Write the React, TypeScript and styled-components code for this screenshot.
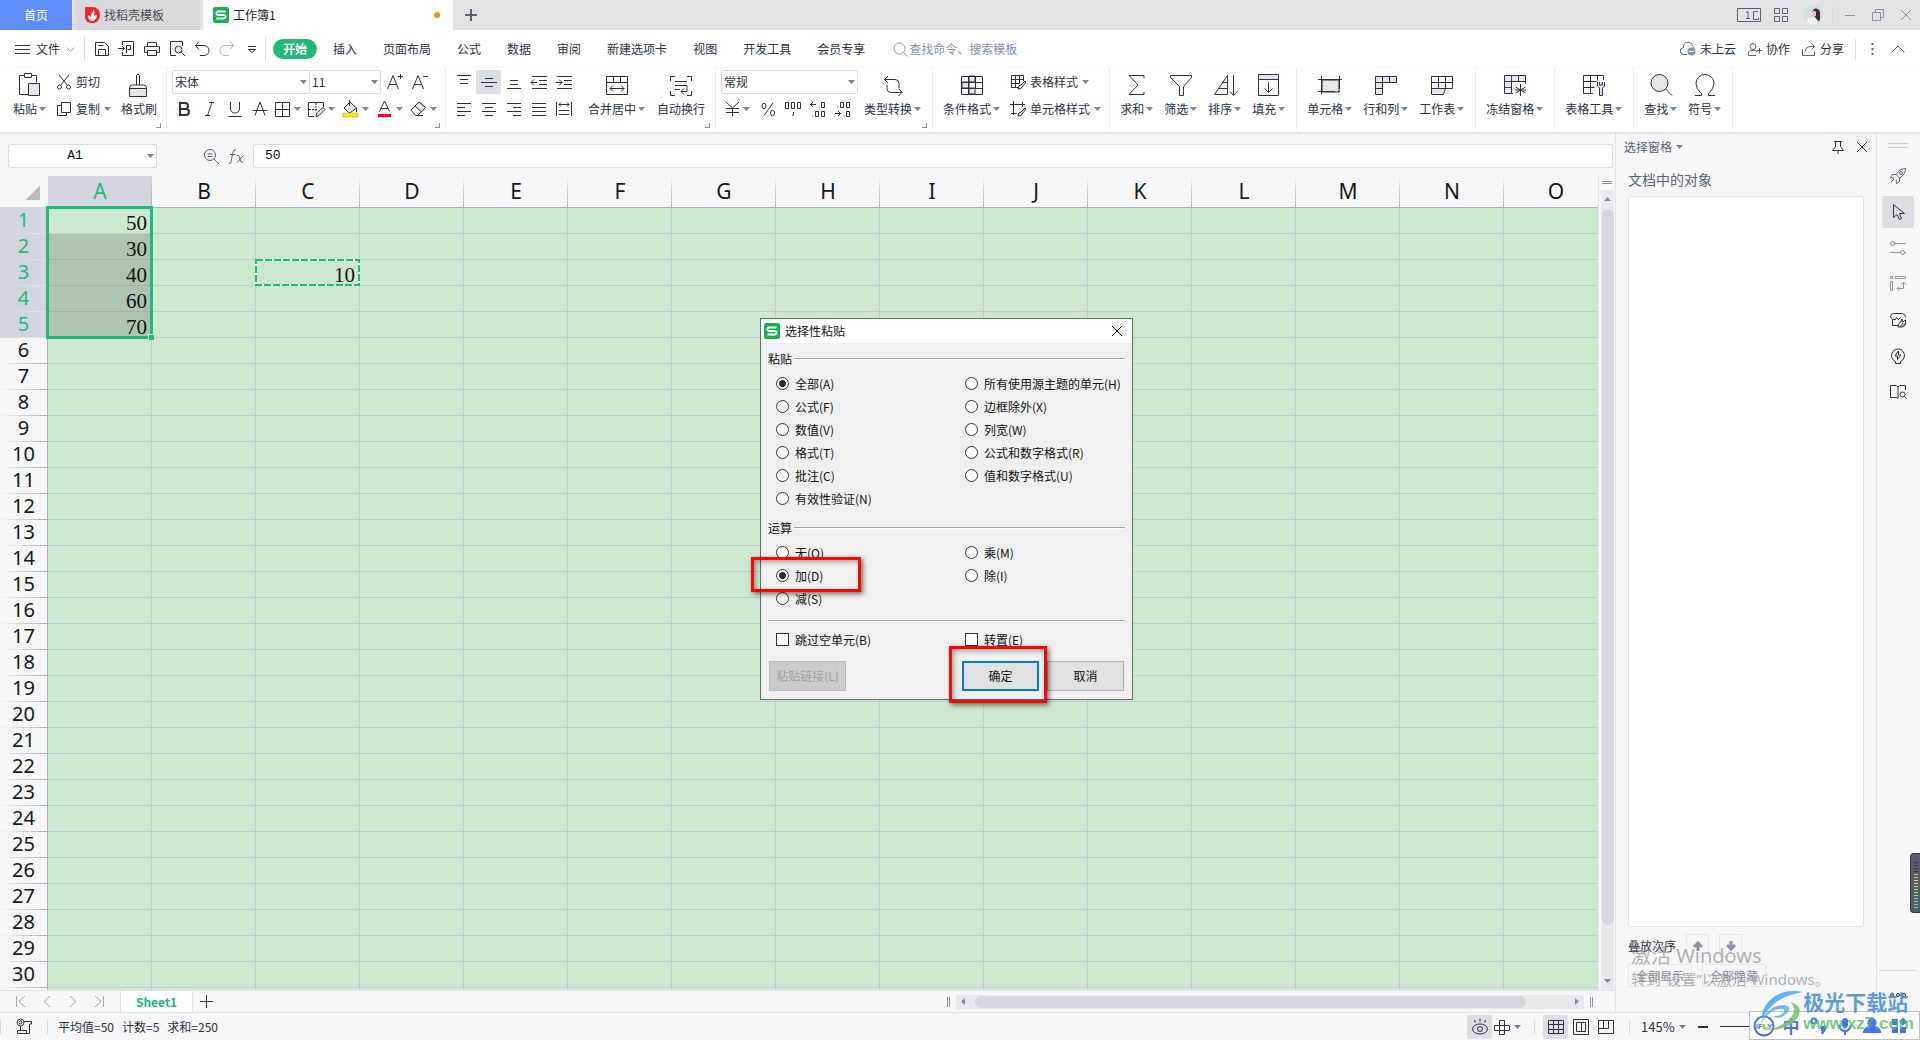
import React from "react";
import styled, { createGlobalStyle, css } from "styled-components";

const ui = `"Noto Sans CJK SC", "Noto Sans", sans-serif`;
const c = {
  ink: "#2a3143",
  soft: "#56617c",
  mute: "#8490ad",
  line: "#d9dbe0",
  bg: "#f6f7f9",
  green: "#21b97c",
  cell: "#cce8cf",
  grid: "#c3c8d6",
  active: "#dadfe5",
  shade: "#e4e6ea",
};

const Global = createGlobalStyle`
  *, *::before, *::after { box-sizing: border-box; }
  html, body { margin: 0; height: 100%; overflow: hidden; }
  body { font-family: ${ui}; font-size: 12px; line-height: 16px; color: ${c.ink}; background: ${c.bg}; }
  button, input, select { font: inherit; color: inherit; margin: 0; padding: 0; border: 0; background: none; }
  button { display: flex; align-items: center; justify-content: center; white-space: nowrap; }
  svg { display: block; flex: none; }
`;

/* ---------- shared parts ---------- */

type IconProps = { w: number; h?: number; color?: string; sw?: number; children: React.ReactNode };
const Icon = ({ w, h = w, color, sw = 1, children }: IconProps) => (
  <svg width={w} height={h} viewBox={`0 0 ${w} ${h}`} fill="none" stroke="currentColor" strokeWidth={sw} color={color} aria-hidden="true">
    {children}
  </svg>
);
const P = ({ d, fill }: { d: string; fill?: string }) => <path d={d} fill={fill} />;

const Caret = () => (
  <svg width="7" height="4" viewBox="0 0 7 4" aria-hidden="true">
    <path d="M0 0h7L3.5 4z" fill="#77819c" />
  </svg>
);

const Shell = styled.div`
  position: relative;
  display: flex;
  flex-direction: column;
  height: 100vh;
  overflow: hidden;
`;
const Row = styled.div`
  display: flex;
  align-items: center;
`;
const Column = styled.div<{ $gap?: number }>`
  display: flex;
  flex-direction: column;
  gap: ${(p) => p.$gap ?? 0}px;
`;
const Rule = styled.span<{ $h: number; $m?: number }>`
  flex: none;
  width: 1px;
  height: ${(p) => p.$h}px;
  margin: 0 ${(p) => p.$m ?? 0}px;
  background: ${c.line};
`;

/* ---------- title bar ---------- */

const TitleBar = styled.header`
  display: flex;
  flex: none;
  height: 30px;
  background: #e2e3e7;
`;
const HomeTab = styled.button`
  width: 72px;
  margin-right: 3px;
  color: #fff;
  background: #5f8efb;
`;
const FileTab = styled.button<{ $active?: boolean }>`
  justify-content: flex-start;
  gap: 4px;
  width: ${(p) => (p.$active ? 250 : 125)}px;
  margin-right: ${(p) => (p.$active ? 0 : 3)}px;
  padding: 0 13px 0 10px;
  color: ${(p) => (p.$active ? "#1c2230" : "#454c5c")};
  background: ${(p) => (p.$active ? "#fff" : "#d8d9dd")};
`;
const Unsaved = styled.span`
  width: 6px;
  height: 6px;
  margin-left: auto;
  border-radius: 50%;
  background: #e99b0b;
`;
const BarButton = styled.button<{ $w: number }>`
  width: ${(p) => p.$w}px;
  height: 30px;
  color: ${c.soft};
`;
const WindowTools = styled.div`
  display: flex;
  align-items: center;
  margin-left: auto;
`;

const WpsLogo = () => (
  <svg width="16" height="16" viewBox="0 0 16 16" aria-hidden="true">
    <rect width="16" height="16" rx="2" fill="#14b454" />
    <path d="M12.5 4.5H5.2a1.6 1.6 0 0 0 0 3.5h5.6a1.6 1.6 0 0 1 0 3.5H3.5" fill="none" stroke="#fff" strokeWidth="1.8" />
  </svg>
);
const DocerLogo = () => (
  <svg width="15" height="16" viewBox="0 0 15 16" aria-hidden="true">
    <path d="M0 0h8a7 8 0 0 1 0 16h-2A6 6 0 0 1 0 10z" fill="#f5242f" />
    <path d="M6.6 14C4 13 2.6 10.5 2.8 8c2 .4 3.5 2 3.800 4C5.500 8 6.500 5 9 2.800c1 3 .4 6.500-1.700 9.200.6-2 2.200-3.800 4.700-4.500.2 3-1.800 6-5.400 6.500z" fill="#fff" />
  </svg>
);

/* ---------- menu row ---------- */

const MenuRow = styled.nav`
  display: flex;
  flex: none;
  align-items: center;
  height: 38px;
  padding-right: 12px;
  background: #fff;
`;
const FileMenu = styled.button`
  height: 24px;
  padding: 0 9px 0 15px;
  gap: 6px;
`;
const QuickTools = styled.div`
  display: flex;
  padding: 0 1px 0 4px;
`;
const Tool = styled.button<{ $active?: boolean; $dim?: boolean }>`
  width: 25px;
  height: 24px;
  border-radius: 2px;
  color: ${(p) => (p.$dim ? "#a9afbd" : c.ink)};
  background: ${(p) => (p.$active ? c.active : "none")};
`;
const MenuTab = styled.button<{ $active?: boolean }>`
  height: 20px;
  padding: 0 13px;
  ${(p) =>
    p.$active &&
    css`
      margin: 0 3px 0 7px;
      padding: 0 10px;
      border-radius: 10px;
      color: #fff;
      font-weight: 700;
      background: ${c.green};
    `}
`;
const Search = styled.label`
  display: flex;
  align-items: center;
  gap: 1px;
  margin-left: 15px;
  color: #8b94ab;
  input {
    width: 140px;
    height: 20px;
    padding-bottom: 2px;
    outline: 0;
  }
  input::placeholder {
    color: #8590ab;
    opacity: 1;
  }
`;
const Account = styled.div`
  display: flex;
  align-items: center;
  gap: 11px;
  margin-left: auto;
`;
const TextTool = styled.button`
  gap: 4px;
  height: 24px;
`;

/* ---------- ribbon ---------- */

const Ribbon = styled.section`
  position: relative;
  z-index: 1;
  display: flex;
  flex: none;
  height: 64px;
  background: #fff;
  box-shadow: 0 1px 3px rgba(60, 70, 90, 0.2);
`;
const Group = styled.div<{ $l?: number; $r?: number; $gap?: number }>`
  position: relative;
  display: flex;
  align-items: flex-start;
  gap: ${(p) => p.$gap ?? 11}px;
  height: 62px;
  padding: 2px ${(p) => p.$r ?? 11}px 0 ${(p) => p.$l ?? 10}px;
  border-right: 1px solid #e9ebef;
`;
const Launcher = styled.button`
  position: absolute;
  right: 5px;
  bottom: 2px;
  width: 5px;
  height: 5px;
  border: solid ${c.mute};
  border-width: 0 1px 1px 0;
`;
const BigButton = styled.button`
  flex-direction: column;
  gap: 2px;
  padding-top: 1px;
  span {
    display: flex;
    align-items: center;
    gap: 2px;
  }
`;
const Split = styled.button`
  justify-content: flex-start;
  width: 34px;
  height: 24px;
  gap: 2px;
`;
const LineButton = styled.button`
  justify-content: flex-start;
  height: 24px;
  gap: 4px;
`;
const Combo = styled.div<{ $w: number }>`
  position: relative;
  width: ${(p) => p.$w}px;
  height: 24px;
  border: 1px solid ${c.line};
  border-radius: 2px;
  & + & {
    border-left: 0;
  }
  select {
    width: 100%;
    height: 22px;
    padding: 0 2px;
    appearance: none;
    outline: 0;
  }
  svg {
    position: absolute;
    right: 2px;
    top: 9px;
    pointer-events: none;
  }
`;

const Big = ({ label, caret = true, children }: { label: string; caret?: boolean; children: React.ReactNode }) => (
  <BigButton type="button">
    <Icon w={28}>{children}</Icon>
    <span>
      {label}
      {caret && <Caret />}
    </span>
  </BigButton>
);
const SplitTool = ({ name, children }: { name: string; children: React.ReactNode }) => (
  <Split type="button" aria-label={name}>
    <Icon w={20}>{children}</Icon>
    <Caret />
  </Split>
);
const SmallTool = ({ name, active, dim, children }: { name: string; active?: boolean; dim?: boolean; children: React.ReactNode }) => (
  <Tool type="button" aria-label={name} $active={active} $dim={dim}>
    <Icon w={18}>{children}</Icon>
  </Tool>
);

/* ---------- workspace ---------- */

const Body = styled.main`
  display: flex;
  flex: 1;
  min-height: 0;
`;
const Work = styled.div`
  display: flex;
  flex: 1;
  flex-direction: column;
  min-width: 0;
`;
const WorkRow = styled.div`
  display: flex;
  flex: 1;
  min-height: 0;
`;
const Book = styled.section`
  display: flex;
  flex: 1;
  flex-direction: column;
  min-width: 0;
`;
const FormulaBar = styled.div`
  display: flex;
  flex: none;
  align-items: center;
  height: 44px;
  padding: 4px 2px 0 8px;
`;
const Field = styled.div<{ $w?: number }>`
  display: flex;
  align-items: center;
  flex: ${(p) => (p.$w ? "none" : 1)};
  width: ${(p) => (p.$w ? `${p.$w}px` : "auto")};
  height: 24px;
  padding-right: 2px;
  border: 1px solid ${c.line};
  border-radius: 2px;
  background: #fff;
  input {
    flex: 1;
    min-width: 0;
    padding: ${(p) => (p.$w ? "0 6px 0 0" : "0 0 0 11px")};
    outline: 0;
    color: #111;
    font-family: "Liberation Mono", monospace;
    font-size: 13px;
    text-align: ${(p) => (p.$w ? "center" : "left")};
  }
`;
const FormulaTools = styled.div`
  display: flex;
  gap: 8px;
  justify-content: flex-end;
  width: 96px;
  padding-right: 8px;
  color: ${c.soft};
`;
const SheetArea = styled.div`
  display: flex;
  flex: 1;
  min-height: 0;
`;
const GridView = styled.div`
  flex: 1;
  min-width: 0;
  overflow: hidden;
  border-right: 1px solid #e1e3e9;
  background: ${c.cell};
`;
const Sheet = styled.table`
  width: 1608px;
  table-layout: fixed;
  border-collapse: separate;
  border-spacing: 0;
  th,
  td {
    padding: 0;
  }
`;
const ColHead = styled.th<{ $on?: boolean }>`
  width: 104px;
  height: 32px;
  border-bottom: 1px solid #a5adc4;
  color: ${(p) => (p.$on ? c.green : "#15171c")};
  font: 400 21px/31px "Noto Sans", sans-serif;
  background: linear-gradient(#a5adc400, #a5adc4) right / 1px 100% no-repeat, ${(p) => (p.$on ? "#d2d5dd" : c.bg)};
`;
const Corner = styled.th`
  width: 48px;
  height: 32px;
  border-bottom: 1px solid #d5d8e0;
  background: linear-gradient(to bottom right, transparent 50%, #b9bbbf 50%) 25px 9px / 15px 15px no-repeat, ${c.bg};
`;
const RowHead = styled.th<{ $on?: boolean }>`
  height: 26px;
  border-right: 1px solid #a5adc4;
  color: ${(p) => (p.$on ? c.green : "#15171c")};
  font: 400 20px/23px "Noto Sans", sans-serif;
  vertical-align: top;
  background: linear-gradient(to right, #a5adc400, ${(p) => (p.$on ? "#dfe2e8" : "#a5adc4")}) bottom / 100% 1px no-repeat,
    ${(p) => (p.$on ? "#d2d5dd" : c.bg)};
`;
const Cell = styled.td<{ $shade?: boolean }>`
  position: relative;
  height: 26px;
  border: solid ${(p) => (p.$shade ? "#a3aeb2" : c.grid)};
  border-width: 0 1px 1px 0;
  background: ${(p) => (p.$shade ? "#adc5b0" : c.cell)};
`;
const Value = styled.span`
  display: block;
  padding: 5px 4px 0 0;
  color: #101010;
  font: 21px/20px "Liberation Serif", serif;
  text-align: right;
`;
const Selection = styled.div`
  position: absolute;
  z-index: 2;
  left: -2px;
  top: -2px;
  width: 107px;
  height: 133px;
  border: 3px solid ${c.green};
  &::after {
    content: "";
    position: absolute;
    right: -4px;
    bottom: -4px;
    width: 6px;
    height: 6px;
    border: solid ${c.cell};
    border-width: 1px 0 0 1px;
    background: ${c.green};
  }
`;
const Marching = styled.svg`
  position: absolute;
  left: -1px;
  top: -1px;
`;
const VScroll = styled.div`
  display: flex;
  flex: none;
  flex-direction: column;
  width: 16px;
  padding: 5px 1px 0 2px;
`;
const Track = styled.div<{ $h?: boolean }>`
  display: flex;
  flex: 1;
  flex-direction: ${(p) => (p.$h ? "row" : "column")};
  align-items: center;
  justify-content: space-between;
  padding: ${(p) => (p.$h ? "0 5px" : "7px 0")};
  background: #e8e9ef;
`;
const Thumb = styled.div<{ $h?: boolean }>`
  flex: 1;
  margin: ${(p) => (p.$h ? "0 49px 0 10px" : "8px 0 54px")};
  width: ${(p) => (p.$h ? "auto" : "12px")};
  height: ${(p) => (p.$h ? "12px" : "auto")};
  border-radius: 6px;
  background: #d4d7df;
`;
const Grip = styled.span<{ $v?: boolean }>`
  flex: none;
  width: ${(p) => (p.$v ? 3 : 10)}px;
  height: ${(p) => (p.$v ? 10 : 3)}px;
  margin: ${(p) => (p.$v ? "0 6px" : "0 1px 6px")};
  border: solid ${c.mute};
  border-width: ${(p) => (p.$v ? "0 1px" : "1px 0")};
`;
const SheetTabs = styled.div`
  display: flex;
  flex: none;
  align-items: center;
  height: 22px;
  padding: 0 16px 0 8px;
  border-top: 1px solid #e1e3e9;
`;
const NavButton = styled.button`
  width: 26px;
  height: 20px;
  color: #a0a4ad;
`;
const SheetTab = styled.button`
  width: 73px;
  height: 21px;
  margin-left: 8px;
  border: solid #e1e3e9;
  border-width: 0 1px;
  color: ${c.green};
  font-weight: 700;
  background: #fff;
`;
const HScroll = styled.div`
  display: flex;
  align-items: center;
  width: 658px;
  height: 14px;
  margin-left: auto;
  ${Track} {
    height: 14px;
  }
`;

/* ---------- selection pane ---------- */

const Pane = styled.aside`
  display: flex;
  flex: none;
  flex-direction: column;
  width: 261px;
  padding: 0 12px 25px;
  border-left: 1px solid #e1e3e9;
  color: ${c.soft};
`;
const PaneHead = styled.div`
  display: flex;
  align-items: center;
  height: 30px;
  margin: 0 -4px;
  gap: 4px;
`;
const PaneTools = styled.div`
  display: flex;
  margin-left: auto;
  gap: 11px;
  color: ${c.ink};
`;
const PaneTitle = styled.h2`
  margin: 8px 0 7px;
  font-size: 14px;
  font-weight: 400;
  line-height: 19px;
`;
const ObjectList = styled.div`
  flex: 1;
  border: 1px solid #e1e3e9;
  border-radius: 2px;
  background: #fff;
`;
const OrderRow = styled.div`
  display: flex;
  align-items: center;
  gap: 10px;
  margin-top: 7px;
  color: ${c.ink};
`;
const PaneButton = styled.button<{ $w: number }>`
  width: ${(p) => p.$w}px;
  height: 23px;
  border: 1px solid #e6e8ec;
  color: #8a93a8;
`;

const SideBar = styled.aside`
  display: flex;
  flex: none;
  flex-direction: column;
  align-items: center;
  width: 44px;
  padding: 11px 2px 18px 0;
  gap: 4px;
  border-left: 1px solid #dfe2e9;
`;
const SideGrip = styled.span`
  width: 20px;
  height: 5px;
  margin-bottom: 8px;
  border: solid #c9cbd0;
  border-width: 1px 0;
`;
const SideButton = styled.button<{ $active?: boolean; $color?: string }>`
  width: 32px;
  height: 32px;
  border-radius: 2px;
  color: ${(p) => p.$color ?? c.ink};
  background: ${(p) => (p.$active ? c.active : "none")};
`;
const SideMore = styled.div`
  display: flex;
  justify-content: center;
  width: 38px;
  height: 52px;
  margin-top: auto;
  padding-top: 8px;
  border-top: 1px solid ${c.line};
`;

const StatusBar = styled.footer`
  display: flex;
  flex: none;
  align-items: center;
  height: 28px;
  border-top: 1px solid #e1e3e9;
`;
const Stats = styled.div`
  display: flex;
  gap: 8px;
  margin-left: 10px;
`;
const ViewTools = styled.div`
  display: flex;
  align-items: center;
  margin-left: auto;
  width: 409px;
`;
const ViewButton = styled.button<{ $active?: boolean }>`
  width: 25px;
  height: 24px;
  border-radius: 2px;
  background: ${(p) => (p.$active ? c.active : "none")};
`;
const ZoomLevel = styled.button`
  gap: 4px;
  margin-right: 12px;
  font-size: 13px;
`;
const ZoomLine = styled.span`
  flex: 1;
  height: 1px;
  background: ${c.ink};
`;

/* ---------- paste special dialog ---------- */

const Dialog = styled.form`
  position: absolute;
  z-index: 5;
  left: 760px;
  top: 318px;
  width: 373px;
  border: 1px solid #5d6f66;
  color: #111;
  background: #f0f0f0;
`;
const DialogTitle = styled.div`
  display: flex;
  align-items: center;
  gap: 5px;
  height: 24px;
  padding: 0 9px 0 3px;
  background: #fff;
  button {
    margin-left: auto;
  }
`;
const DialogBody = styled.div`
  padding: 8px 7px;
`;
const Section = styled.fieldset`
  min-width: 0;
  margin: 0 0 10px;
  padding: 0;
  border: 0;
`;
const SectionHead = styled.div`
  display: flex;
  align-items: center;
  gap: 2px;
  margin-bottom: 5px;
`;
const Groove = styled.span`
  flex: 1;
  height: 2px;
  border-top: 1px solid #a0a0a0;
  background: #fff;
`;
const Choices = styled.div`
  display: grid;
  grid-template-columns: 189px 1fr;
  padding-left: 8px;
`;
const Options = styled(Choices)`
  margin-top: 6px;
`;
const ChoiceLabel = styled.label`
  display: flex;
  align-items: center;
  gap: 6px;
  height: 23px;
  white-space: nowrap;
  input {
    appearance: none;
    flex: none;
    width: 13px;
    height: 13px;
    border: 1px solid #333;
    background: #fff;
  }
  input[type="radio"] {
    border-radius: 50%;
  }
  input:checked {
    background: radial-gradient(circle, #2b2b2b 3px, #fff 4px);
  }
`;
const DialogButtons = styled.div`
  display: flex;
  gap: 8px;
  margin-top: 10px;
  padding: 0 1px;
`;
const DialogButton = styled.button<{ $main?: boolean }>`
  width: 77px;
  height: 30px;
  border: ${(p) => (p.$main ? "2px solid #0078d7" : "1px solid #adadad")};
  background: #e1e1e1;
  &:first-child {
    margin-right: auto;
  }
  &:disabled {
    border-color: #bfbfbf;
    color: #a0a0a0;
    background: #ccc;
  }
`;
const Marker = styled.div<{ $x: number; $y: number; $w: number; $h: number }>`
  position: absolute;
  left: ${(p) => p.$x}px;
  top: ${(p) => p.$y}px;
  width: ${(p) => p.$w}px;
  height: ${(p) => p.$h}px;
  border: 3px solid #fb0505;
  box-shadow: 2px 2px 5px rgba(0, 0, 0, 0.55), inset 2px 2px 5px rgba(0, 0, 0, 0.35);
  pointer-events: none;
`;

/* ---------- desktop overlays ---------- */

const Activation = styled.div`
  position: absolute;
  right: 95px;
  bottom: 51px;
  width: 194px;
  color: rgba(125, 127, 132, 0.6);
  font: 15px/20px "Noto Sans", "Noto Sans CJK SC", sans-serif;
  white-space: nowrap;
  pointer-events: none;
  strong {
    display: block;
    font-size: 20px;
    font-weight: 400;
    line-height: 26px;
  }
`;
const ImeBar = styled.div`
  position: absolute;
  right: 0;
  bottom: 0;
  display: flex;
  align-items: center;
  gap: 5px;
  width: 171px;
  height: 29px;
  padding-left: 3px;
  border: 1px solid #bdbfc4;
  background: #fff;
  color: #4b6ff5;
  b {
    width: 22px;
    font-size: 17px;
    text-align: center;
  }
`;
const SiteMark = styled.div`
  position: absolute;
  right: 6px;
  bottom: 6px;
  display: flex;
  align-items: center;
  pointer-events: none;
`;
const SiteName = styled.div`
  color: rgba(66, 140, 212, 0.85);
  font-size: 21px;
  font-weight: 700;
  line-height: 26px;
  small {
    display: block;
    color: rgba(76, 190, 96, 0.8);
    font: 700 17px/20px "Liberation Sans", sans-serif;
  }
`;
const Meter = styled.div`
  position: absolute;
  right: 0;
  top: 853px;
  width: 10px;
  height: 60px;
  padding: 8px 3px;
  border: 1px solid #33363f;
  border-right: 0;
  border-radius: 4px 0 0 4px;
  background: #565c6a;
  overflow: hidden;
`;
const MeterBar = styled.div`
  width: 4px;
  height: 1px;
  margin-bottom: 2px;
`;

/* ---------- data ---------- */

const columns = "ABCDEFGHIJKLMNO".split("");
const rows = Array.from({ length: 31 }, (_, i) => i + 1);
const values: Record<string, number> = { A1: 50, A2: 30, A3: 40, A4: 60, A5: 70, C3: 10 };
const menuTabs = ["开始", "插入", "页面布局", "公式", "数据", "审阅", "新建选项卡", "视图", "开发工具", "会员专享"];
const pasteChoices = ["全部(A)", "所有使用源主题的单元(H)", "公式(F)", "边框除外(X)", "数值(V)", "列宽(W)", "格式(T)", "公式和数字格式(R)", "批注(C)", "值和数字格式(U)", "有效性验证(N)"];
const mathChoices = ["无(O)", "乘(M)", "加(D)", "除(I)", "减(S)"];
const meter = ["#33363f", "#33363f", "#33363f", "#33363f", "#e9b84e", "#e9c04e", "#e6cf5a", "#dcd964", "#cfdf6c", "#bde276", "#a9e182", "#98df90", "#8ade9c", "#7edca8", "#72dab4", "#68d8be"];

const RadioSet = ({ name, items, value }: { name: string; items: string[]; value: string }) => (
  <Choices>
    {items.map((t) => (
      <ChoiceLabel key={t}>
        <input type="radio" name={name} defaultChecked={t === value} />
        {t}
      </ChoiceLabel>
    ))}
  </Choices>
);

const PasteSpecial = () => (
  <Dialog aria-label="选择性粘贴" onSubmit={(e) => e.preventDefault()}>
    <DialogTitle>
      <WpsLogo />
      选择性粘贴
      <button type="button" aria-label="关闭">
        <Icon w={12} color="#111"><P d="M1 1l10 10M11 1L1 11" /></Icon>
      </button>
    </DialogTitle>
    <DialogBody>
      <Section>
        <SectionHead>粘贴<Groove /></SectionHead>
        <RadioSet name="paste" items={pasteChoices} value="全部(A)" />
      </Section>
      <Section>
        <SectionHead>运算<Groove /></SectionHead>
        <RadioSet name="math" items={mathChoices} value="加(D)" />
      </Section>
      <Row><Groove /></Row>
      <Options>
        {["跳过空单元(B)", "转置(E)"].map((t) => (
          <ChoiceLabel key={t}>
            <input type="checkbox" />
            {t}
          </ChoiceLabel>
        ))}
      </Options>
      <DialogButtons>
        <DialogButton type="button" disabled>粘贴链接(L)</DialogButton>
        <DialogButton type="submit" $main>确定</DialogButton>
        <DialogButton type="button">取消</DialogButton>
      </DialogButtons>
    </DialogBody>
    <Marker $x={-10} $y={238} $w={110} $h={35} />
    <Marker $x={188} $y={327} $w={98} $h={57} />
  </Dialog>
);

const RibbonBar = () => (
  <Ribbon>
    <Group $l={13} $r={9} $gap={10}>
      <Big label="粘贴">
        <P d="M8.500 4.500h-5v19h9M15.500 4.500h5v7" />
        <P d="M8.500 2.500h7v4h-7z" />
        <P d="M12.500 12.500h11v12h-11z" fill={c.shade} />
      </Big>
      <Column $gap={3}>
        <LineButton type="button">
          <Icon w={16}>
            <P d="M3 1l8.500 10.500M13 1L4.500 11.500" />
            <circle cx="3.500" cy="13" r="2" /><circle cx="12.500" cy="13" r="2" />
          </Icon>
          剪切
        </LineButton>
        <LineButton type="button">
          <Icon w={16}><P d="M5.500 1.500h9v10h-9z" /><P d="M5.500 4.500h-4v10h9v-3" /></Icon>
          复制<Caret />
        </LineButton>
      </Column>
      <Big label="格式刷" caret={false}>
        <P d="M11.500 14V4.500q1.500-3 3 0V14M4.500 20v-3q0-3 3-3h11q3 0 3 3v3" />
        <P d="M4.500 17.500h17v8h-17z" fill={c.shade} />
      </Big>
      <Launcher type="button" aria-label="剪贴板" />
    </Group>

    <Group $l={5} $r={3}>
      <Column $gap={3}>
        <Row>
          <Combo $w={138}><select aria-label="字体"><option>宋体</option></select><Caret /></Combo>
          <Combo $w={71}><select aria-label="字号"><option>11</option></select><Caret /></Combo>
          <SmallTool name="增大字号"><P d="M2.500 16L8 2.500 13.500 16M4.500 11.500h7M13 3.500h5M15.500 1v5" /></SmallTool>
          <SmallTool name="减小字号"><P d="M2.500 16L8 2.500 13.500 16M4.500 11.500h7M13 3.500h5" /></SmallTool>
        </Row>
        <Row>
          <Tool type="button" aria-label="加粗"><Icon w={18} sw={2}><P d="M4 3h5a3 3 0 0 1 0 6H4zM4 9h6a3 3 0 0 1 0 6H4z" /></Icon></Tool>
          <SmallTool name="倾斜"><P d="M8 2.500h5M4 15.500h5M11 2.500l-4.500 13" /></SmallTool>
          <SmallTool name="下划线"><P d="M4.500 2v7a4.500 4 0 0 0 9 0V2M2.500 16.500h13" /></SmallTool>
          <SmallTool name="删除线"><P d="M4 15.500L9 2l5 13.500M1.500 10.500h15" /></SmallTool>
          <SplitTool name="边框"><P d="M3.500 3.500h14v14h-14zM10.500 3.500v14M3.500 10.500h14" /></SplitTool>
          <SplitTool name="绘图边框">
            <P d="M8 17.500H2.500v-14h15V8" /><path d="M10 4v8M3 10.500h8" strokeDasharray="2 1" /><P d="M10 17.500l1-4 6-5 2 2-6 6z" fill={c.shade} />
          </SplitTool>
          <SplitTool name="填充颜色">
            <P d="M4 9l6-6 6.500 6-6 4.500h-2z" fill={c.shade} /><P d="M9.500 1v6M16.500 9v4" /><path d="M3 14h15v4H3z" fill="#ffee00" stroke="#a9a53a" strokeWidth=".6" />
          </SplitTool>
          <SplitTool name="字体颜色"><P d="M5.500 12.500L10.500 2l5 10.500M7 9.500h7" /><path d="M4 16.500h13" stroke="#f00" strokeWidth="3" /></SplitTool>
          <SplitTool name="清除"><P d="M3 11l8-8 6.500 5.500-8 8h-2z" /><P d="M7 7l6.500 6L17.500 8.500 11 3zM9 16.500h6" fill={c.shade} /></SplitTool>
        </Row>
      </Column>
      <Launcher type="button" aria-label="字体设置" />
    </Group>

    <Group $l={5} $r={10} $gap={12}>
      <Column $gap={3}>
        <Row>
          <SmallTool name="顶端对齐"><P d="M2 2.500h14M5 6.500h8M5 10.500h8" /></SmallTool>
          <SmallTool name="垂直居中" active><P d="M5 5.500h8M1 9.500h16M5 13.500h8" /></SmallTool>
          <SmallTool name="底端对齐"><P d="M5 7.500h8M5 11.500h8M2 15.500h14" /></SmallTool>
          <SmallTool name="减少缩进"><P d="M2 3.500h15M9 7.500h8M9 11.500h8M2 15.500h15M1 9.500h6M4 6.500l-3 3 3 3" /></SmallTool>
          <SmallTool name="增加缩进"><P d="M2 3.500h15M9 7.500h8M9 11.500h8M2 15.500h15M1 9.500h6M4 6.500l3 3-3 3" /></SmallTool>
        </Row>
        <Row>
          <SmallTool name="左对齐"><P d="M2 3.500h14M2 7.500h8M2 11.500h14M2 15.500h8" /></SmallTool>
          <SmallTool name="居中"><P d="M2 3.500h14M5 7.500h8M2 11.500h14M5 15.500h8" /></SmallTool>
          <SmallTool name="右对齐"><P d="M2 3.500h14M8 7.500h8M2 11.500h14M8 15.500h8" /></SmallTool>
          <SmallTool name="两端对齐"><P d="M2 3.500h14M2 7.500h14M2 11.500h14M2 15.500h14" /></SmallTool>
          <SmallTool name="分散对齐"><P d="M1.500 2v14M16.500 2v14M4 4.500h10M6 2.500l-2 2 2 2M12 2.500l2 2-2 2M4 10.500h10M4 14.500h10" /></SmallTool>
        </Row>
      </Column>
      <Big label="合并居中"><P d="M3.500 5.500h21v18h-21zM3.500 11.500h21M10.500 5.500v6M17.500 5.500v6M7 17.500h14M10 14.500l-3 3 3 3M18 14.500l3 3-3 3" /></Big>
      <Big label="自动换行" caret={false}><P d="M8 5.500H3.500V10M20 5.500h4.500V10M8 24.500H3.500V20M20 24.500h4.500V20M8 10.500h12M8 14.500h12M8 18.500h5M20 14.500v6h-6M17 17.500l-3 3 3 3" /></Big>
      <Launcher type="button" aria-label="对齐设置" />
    </Group>

    <Group $l={5} $r={11} $gap={6}>
      <Column $gap={3}>
        <Combo $w={137}><select aria-label="数字格式"><option>常规</option></select><Caret /></Combo>
        <Row>
          <SplitTool name="货币"><P d="M5 3l6.500 6L18 3M11.500 9v8M5 9.500h13M5 13.500h13" /></SplitTool>
          <SmallTool name="百分比"><P d="M14 3L5 15.500" /><ellipse cx="5" cy="6" rx="2" ry="2.800" /><ellipse cx="13.500" cy="13" rx="2" ry="2.800" /></SmallTool>
          <SmallTool name="千位分隔"><P d="M1.500 2.500h3v6h-3zM7.500 2.500h3v6h-3zM13.500 2.500h3v6h-3zM9.500 12v2l-1 2" /></SmallTool>
          <SmallTool name="增加小数位"><P d="M1 4.500h6M4 2L1.500 4.500 4 7M12.500 2.500h3v5h-3zM6.500 11.500h3v5h-3zM12.500 11.500h3v5h-3zM10 6.500v1M4 15.500v1" /></SmallTool>
          <SmallTool name="减少小数位"><P d="M6.500 2.500h3v5h-3zM12.500 2.500h3v5h-3zM1 13.500h6M4 11l2.500 2.500L4 16M12.500 11.500h3v5h-3zM4 6.500v1M10 15.500v1" /></SmallTool>
        </Row>
      </Column>
      <Big label="类型转换"><P d="M9 5L5.500 8.500 9 12M5.500 8.500H16q4 0 4 4v5M20 18l3 3.500-3.500 3.500M22.500 21.500H12q-4 0-4-4v-4" /></Big>
      <Launcher type="button" aria-label="数字设置" />
    </Group>

    <Group $r={8} $gap={10}>
      <Big label="条件格式">
        <P d="M11 5h6v6h-6zM4 11h7v6H4zM11 17h6v6h-6z" fill={c.shade} /><P d="M3.500 5.500h21v18h-21zM3.500 11.500h21M3.500 17.500h21M10.500 5.500v18M17.500 5.500v12" />
      </Big>
      <Column $gap={3}>
        <LineButton type="button">
          <Icon w={16}><P d="M8 13.500H1.500v-12h12V7M1.500 5.500h12M1.500 9.500h8M5.500 1.500v12M9.500 1.500v8" /><P d="M8 15q0-4 3-4l4-4 1 1-4 5q0 2-4 2z" fill={c.shade} /></Icon>
          表格样式<Caret />
        </LineButton>
        <LineButton type="button">
          <Icon w={16}><P d="M3.500 0v14M0 3.500h15M12.500 1v5M1 12.500h6" /><P d="M8 15q0-4 3-4l4-4 1 1-4 5q0 2-4 2z" fill={c.shade} /></Icon>
          单元格样式<Caret />
        </LineButton>
      </Column>
    </Group>

    <Group>
      <Big label="求和"><P d="M21 7V4.500H6l9 9.500-9 9.500h15V21" /></Big>
      <Big label="筛选"><P d="M3.500 4.500h21v2l-8 9v9h-4v-9l-9-9z" /></Big>
      <Big label="排序"><P d="M16.500 4.500v19h-13zM11 11.500h5.500M7.500 17.500h9M22.500 4v20M19 20.500l3.500 4 3.500-4" /></Big>
      <Big label="填充"><P d="M3.500 3.500h20v5h-20z" fill={c.shade} /><P d="M3.500 8.500h20v16h-20zM13.500 11v10M9.500 17.500l4 4 4-4" /></Big>
    </Group>

    <Group>
      <Big label="单元格"><P d="M6 9h17v12H6z" fill={c.shade} /><path d="M5.500 5v18M2 8.500h24M23.500 5v13M2 20.500h17M22 20.500h2" /></Big>
      <Big label="行和列"><P d="M3.500 5.500h21v6h-14v12h-7zM10.500 5.500v6M17.500 5.500v6M3.500 11.500h7M3.500 17.500h7" fill={c.shade} /></Big>
      <Big label="工作表"><P d="M3.500 17.500h14l-2 6h-12z" fill={c.shade} /><P d="M3.500 5.500h21v12h-21zM10.500 5.500v12M17.500 5.500v12M3.500 11.500h21" /></Big>
    </Group>

    <Group>
      <Big label="冻结窗格">
        <P d="M24.500 13V4.500h-21v18H12M3.500 10.500h21M3.500 16.500h7M10.500 4.500v18M17.500 4.500v6" fill="none" />
        <path d="M4 5h20v5H10v12H4z" fill="#8a93a838" stroke="none" />
        <P d="M19.500 13v12M14.500 16l10 6M24.500 16l-10 6M14 19h11" />
      </Big>
    </Group>
    <Group>
      <Big label="表格工具">
        <P d="M13 22.500H3.500v-18h20V9M3.500 10.500h13M3.500 16.500h11M10.500 4.500v18M17.500 4.500v5" />
        <P d="M17.500 11v4l2 2v7.500h3V17l2-2v-4M19.500 11v3h3v-3" fill={c.shade} />
      </Big>
    </Group>
    <Group>
      <Big label="查找"><circle cx="12.500" cy="12" r="8.500" fill={c.shade} /><P d="M18.500 18l6.500 6.500" /></Big>
      <Big label="符号"><P d="M4 24.500h6.500v-2Q5 18 5 12.500a9 9 0 0 1 18 0q0 5.500-5.500 10v2H24" /></Big>
    </Group>
  </Ribbon>
);

const Workbook = () => (
  <Book>
    <FormulaBar>
      <Field $w={149}>
        <input aria-label="名称框" defaultValue="A1" />
        <Caret />
      </Field>
      <FormulaTools>
        <Icon w={17}><circle cx="7" cy="7" r="5.500" /><P d="M4.500 6h5M4.500 8.500h5M11 11l5 5" /></Icon>
        <Icon w={17}><P d="M8 2Q5.500 1 5 4L3 14q-.5 2-2 1.500M2 6.500h5M9 7.500q2-1 2.500 1.500l1 4q.5 2 2.500 1M15.500 7.500l-6.500 7" /></Icon>
      </FormulaTools>
      <Field><input aria-label="编辑栏" defaultValue="50" /></Field>
    </FormulaBar>
    <SheetArea>
      <GridView>
        <Sheet>
          <thead>
            <tr>
              <Corner />
              {columns.map((k) => <ColHead key={k} $on={k === "A"}>{k}</ColHead>)}
            </tr>
          </thead>
          <tbody>
            {rows.map((r) => (
              <tr key={r}>
                <RowHead $on={r < 6}>{r < 31 ? r : ""}</RowHead>
                {columns.map((k) => {
                  const id = k + r;
                  return (
                    <Cell key={id} $shade={k === "A" && r > 1 && r < 6}>
                      {values[id] && <Value>{values[id]}</Value>}
                      {id === "A1" && <Selection />}
                      {id === "C3" && (
                        <Marching width="105" height="27" aria-hidden="true">
                          <rect x="1" y="1" width="103" height="25" fill="none" stroke="#fff" strokeWidth="2" />
                          <rect x="1" y="1" width="103" height="25" fill="none" stroke={c.green} strokeWidth="2" strokeDasharray="7 2" />
                        </Marching>
                      )}
                    </Cell>
                  );
                })}
              </tr>
            ))}
          </tbody>
        </Sheet>
      </GridView>
      <VScroll>
        <Grip />
        <Track>
          <Icon w={7} h={4} color="#7f8bab"><path d="M0 4h7L3.500 0z" fill="currentColor" stroke="none" /></Icon>
          <Thumb />
          <Icon w={7} h={4} color="#7f8bab"><path d="M0 0h7L3.500 4z" fill="currentColor" stroke="none" /></Icon>
        </Track>
      </VScroll>
    </SheetArea>
    <SheetTabs>
      {[["首个工作表", "M1.500 1v11M10 1L4 6.500l6 5.500"], ["上一个工作表", "M9 1L3 6.500 9 12"], ["下一个工作表", "M3 1l6 5.500L3 12"], ["末个工作表", "M10.500 1v11M2 1l6 5.500L2 12"]].map(([name, d]) => (
        <NavButton key={name} type="button" aria-label={name}><Icon w={12} h={13}><P d={d} /></Icon></NavButton>
      ))}
      <SheetTab type="button">Sheet1</SheetTab>
      <NavButton type="button" aria-label="新建工作表"><Icon w={13} color={c.ink}><P d="M6.500 0v13M0 6.500h13" /></Icon></NavButton>
      <HScroll>
        <Grip $v />
        <Track $h>
          <Icon w={4} h={7} color="#7f8bab"><path d="M4 0v7L0 3.500z" fill="currentColor" stroke="none" /></Icon>
          <Thumb $h />
          <Icon w={4} h={7} color="#7f8bab"><path d="M0 0v7l4-3.500z" fill="currentColor" stroke="none" /></Icon>
        </Track>
        <Grip $v />
      </HScroll>
    </SheetTabs>
  </Book>
);

const SelectionPane = () => (
  <Pane>
    <PaneHead>
      选择窗格<Caret />
      <PaneTools>
        <button type="button" aria-label="固定"><Icon w={14}><P d="M4.500 1.500h5v5l3 4h-11l3-4zM7 10.500V14M3 1.500h8" /></Icon></button>
        <button type="button" aria-label="关闭"><Icon w={12}><P d="M1 1l10 10M11 1L1 11" /></Icon></button>
      </PaneTools>
    </PaneHead>
    <PaneTitle>文档中的对象</PaneTitle>
    <ObjectList />
    <OrderRow>
      叠放次序
      <PaneButton type="button" $w={23} aria-label="上移"><Icon w={10} sw={3}><P d="M5 10V3M1 6L5 2l4 4" /></Icon></PaneButton>
      <PaneButton type="button" $w={23} aria-label="下移"><Icon w={10} sw={3}><P d="M5 0v7M1 4l4 4 4-4" /></Icon></PaneButton>
    </OrderRow>
    <OrderRow>
      <PaneButton type="button" $w={64}>全部显示</PaneButton>
      <PaneButton type="button" $w={64}>全部隐藏</PaneButton>
    </OrderRow>
  </Pane>
);

export default function App() {
  return (
    <Shell>
      <Global />
      <TitleBar>
        <HomeTab type="button">首页</HomeTab>
        <FileTab type="button"><DocerLogo />找稻壳模板</FileTab>
        <FileTab type="button" $active><WpsLogo />工作簿1<Unsaved /></FileTab>
        <BarButton type="button" $w={36} aria-label="新建"><Icon w={12} sw={2}><P d="M6 0v12M0 6h12" /></Icon></BarButton>
        <WindowTools>
          <BarButton type="button" $w={32} aria-label="窗口"><Icon w={24} h={14}><P d="M.5.5h23v13H.5zM9 4.500l2-1v7M9 10.500h4M21 3.500h-4.500v8h5v-2" /></Icon></BarButton>
          <BarButton type="button" $w={32} aria-label="应用"><Icon w={14}><P d="M.5.5h5v5h-5zM8.500.5h5v5h-5zM.5 8.500h5v5h-5zM8.500 8.500h5v5h-5z" /></Icon></BarButton>
          <BarButton type="button" $w={32} aria-label="账户">
            <svg width="20" height="20" viewBox="0 0 20 20">
              <circle cx="10" cy="10" r="10" fill="#cfe0e8" />
              <path d="M9 7q1-3.500 4-3.500 4.500.5 4 6 1 4-1 7l-3-3z" fill="#3b2c33" />
              <path d="M9 6.500q2.500-1.500 4 .5v3.500q-2 2-4 0z" fill="#ecc7b8" />
              <path d="M4 18q0-6 5-6 4 0 5 7-5 2-10-1z" fill="#eef3f7" />
            </svg>
          </BarButton>
          <Rule $h={20} $m={3} />
          <BarButton type="button" $w={28} aria-label="最小化"><Icon w={12} color={c.mute}><P d="M1 6.500h10" /></Icon></BarButton>
          <BarButton type="button" $w={28} aria-label="还原"><Icon w={12} color={c.mute}><P d="M.5 3.500h8v8h-8zM3.500 3.500v-3h8v8h-3" /></Icon></BarButton>
          <BarButton type="button" $w={28} aria-label="关闭"><Icon w={12} color={c.mute}><P d="M1 1l10 10M11 1L1 11" /></Icon></BarButton>
        </WindowTools>
      </TitleBar>

      <MenuRow>
        <FileMenu type="button">
          <Icon w={15}><P d="M0 3.500h15M0 7.500h15M0 11.500h15" /></Icon>
          文件
          <Icon w={9} color="#9aa1b0"><P d="M.5 2.500l4 4 4-4" /></Icon>
        </FileMenu>
        <Rule $h={24} />
        <QuickTools>
          <SmallTool name="保存"><P d="M2.500 2.500h9l4 4v9h-13zM5.500 15.500v-6h7v6M5.500 5.500h5" /></SmallTool>
          <SmallTool name="输出为PDF"><P d="M4.500 5V1.500h11v14h-11V12M0 8.500h6M4 6l2.500 2.500L4 11M8.500 13V5.500h4v4h-3" /></SmallTool>
          <SmallTool name="打印"><P d="M4.500 6V2.500h9V6M4.500 12.500h-3v-6h15v6h-3M4.500 10.500h9v5h-9z" /></SmallTool>
          <SmallTool name="打印预览"><P d="M8 15.500H2.500v-14h12V6" /><circle cx="10.500" cy="9.500" r="3.500" fill={c.shade} /><P d="M13 12l4 4" /></SmallTool>
          <SmallTool name="撤销"><P d="M6 1.500l-3.500 4 3.500 4M2.500 5.500H11a4.500 4.500 0 0 1 0 10H7" /></SmallTool>
          <SmallTool name="恢复" dim><P d="M12 1.500l3.500 4-3.500 4M15.500 5.500H7a4.500 4.500 0 0 0 0 10h4" /></SmallTool>
          <SmallTool name="更多"><P d="M5 6.500h8M5.500 9.500L9 12.500l3.500-3z" /></SmallTool>
        </QuickTools>
        <Rule $h={24} />
        {menuTabs.map((t, i) => <MenuTab key={t} type="button" $active={i === 0}>{t}</MenuTab>)}
        <Search>
          <Icon w={15}><circle cx="6.500" cy="6.500" r="5.500" /><P d="M10.500 10.500l4 4" /></Icon>
          <input placeholder="查找命令、搜索模板" aria-label="查找命令" />
        </Search>
        <Account>
          <TextTool type="button">
            <Icon w={16} color={c.soft}><P d="M7 13.500H4a3.500 3.500 0 0 1-.5-7A4.500 4.500 0 0 1 12.500 5q1 .5 1.500 2" /><circle cx="11.500" cy="10.500" r="4" fill={c.mute} stroke="none" /><path d="M9 10.500h5" stroke="#fff" /></Icon>
            未上云
          </TextTool>
          <TextTool type="button">
            <Icon w={15} color={c.soft}><circle cx="6" cy="4.500" r="3" /><P d="M9 13.500H1.500Q.5 8.500 4 8.500h4q1.500 0 2 1.500M9.500 8.500H15M12.500 6v5.500" /></Icon>
            协作
          </TextTool>
          <TextTool type="button">
            <Icon w={15} color={c.soft}><P d="M1.500 7.500v6h12v-4M4 10q.5-5.500 6-5.500h3M10.500 1.500l3 3-3 3" /></Icon>
            分享
          </TextTool>
          <Row>
            <Rule $h={20} />
            <BarButton type="button" $w={32} aria-label="更多"><Icon w={3} h={14}><path d="M1.500 1v2M1.500 6v2M1.500 11v2" strokeWidth="2" /></Icon></BarButton>
            <BarButton type="button" $w={20} aria-label="折叠功能区"><Icon w={14} h={8}><P d="M.5 7.500L7 1l6.500 6.500" /></Icon></BarButton>
          </Row>
        </Account>
      </MenuRow>

      <RibbonBar />

      <Body>
        <Work>
          <WorkRow>
            <Workbook />
            <SelectionPane />
          </WorkRow>
          <StatusBar>
            <Row>
              <Rule $h={14} />
              <BarButton type="button" $w={46} aria-label="宏"><Icon w={18} color={c.ink}><circle cx="5.500" cy="4.500" r="3.500" /><circle cx="5.500" cy="4.500" r="1.500" /><P d="M9 3.500h7.500V6h-2v9.500H2.500v-3h9v3M5.500 8v4.500" /></Icon></BarButton>
              <Rule $h={14} />
            </Row>
            <Stats><span>平均值=50</span><span>计数=5</span><span>求和=250</span></Stats>
            <ViewTools>
              <ViewButton type="button" $active aria-label="护眼模式"><Icon w={18}><ellipse cx="9" cy="11" rx="7.500" ry="5" /><circle cx="9" cy="11" r="2.500" /><P d="M9 .5v3M3.500 2l1 2.500M14.500 2l-1 2.500" /></Icon></ViewButton>
              <Split type="button" aria-label="阅读模式"><Icon w={20}><P d="M7.500 3.500h5v14h-5zM2.500 8.500h15v5h-15z" /></Icon><Caret /></Split>
              <Rule $h={14} $m={8} />
              <ViewButton type="button" $active aria-label="普通视图"><Icon w={18}><P d="M1.500 2.500h15v13h-15zM1.500 6.500h15M1.500 11.500h15M6.500 2.500v13M11.500 2.500v13" /></Icon></ViewButton>
              <ViewButton type="button" aria-label="页面布局"><Icon w={18}><P d="M1.500 1.500h15v15h-15zM4.500 4.500h9v9h-9zM9.500 4.500v9" /></Icon></ViewButton>
              <ViewButton type="button" aria-label="分页预览"><Icon w={18}><P d="M1.500 2.500h15v13h-15zM6.500 2.500v8M11.500 2.500v8M1.500 10.500h10" /></Icon></ViewButton>
              <Rule $h={14} $m={11} />
              <ZoomLevel type="button">145%<Caret /></ZoomLevel>
              <Icon w={22} h={2} sw={2}><P d="M0 1h10" /></Icon>
              <ZoomLine />
            </ViewTools>
          </StatusBar>
        </Work>
        <SideBar>
          <SideGrip />
          <SideButton type="button" aria-label="快捷" $color={c.soft}><Icon w={18}><P d="M16.500 1.500q-6 0-9.500 6l3.500 3.500q6-3.500 6-9.500zM7 7.500H3.500l-2 3 3.500.5M10.500 11v3.500l-3 2-.5-3.500M5 12l-3 3" /><circle cx="12" cy="6" r="1.500" /></Icon></SideButton>
          <SideButton type="button" aria-label="选择" $active><Icon w={18}><P d="M4.500 1.500v13l3.500-3 2.500 5 2-1-2-5h5z" /></Icon></SideButton>
          <SideButton type="button" aria-label="属性" $color="#8b93a5"><Icon w={18}><circle cx="3.500" cy="4.500" r="2" /><circle cx="13.500" cy="13.500" r="2" /><P d="M5.500 4.500H17M1 13.500h10.500M15.500 13.500H17" /></Icon></SideButton>
          <SideButton type="button" aria-label="样式" $color="#8b93a5"><Icon w={18}><P d="M1.500 1.500h2v2h-2zM6.500 1.500h10v2h-10zM1.500 6.500h2v9h-2zM8 13.500h6.500V7M10.500 11L8 13.500l2.500 2.500M12 9.500L14.500 7 17 9.500" /></Icon></SideButton>
          <SideButton type="button" aria-label="素材"><Icon w={18}><P d="M9 14.500H3.500V8.500L1.500 6q0-3.500 3-3.500h9q3 0 3 4M3.500 8.500h3l1-2 2 2 2-2M9 16q0-4 2-4l2-4 .5 3 3-2q1 7-4 7z" /><P d="M11 16l3-4M13 16l3-3.500" /></Icon></SideButton>
          <SideButton type="button" aria-label="灵感"><Icon w={18}><P d="M6.500 16.500v-2a6.500 6.500 0 1 1 5 0v2zM9.500 4l-3.500 5h2.500V12.500L12 8H9.500z" /></Icon></SideButton>
          <SideButton type="button" aria-label="帮助"><Icon w={18}><P d="M9 15.500l-1.500-1H1.500v-12h6L9 4l1.500-1.500h6V7M9 4v11.500" /><circle cx="13.500" cy="11.500" r="2.500" /><P d="M15.500 13.500l2 2" /></Icon></SideButton>
          <SideMore>
            <SideButton type="button" aria-label="更多"><Icon w={18} h={6}><circle cx="3" cy="3" r="1.500" /><circle cx="9" cy="3" r="1.500" /><circle cx="15" cy="3" r="1.500" /></Icon></SideButton>
          </SideMore>
        </SideBar>
      </Body>

      <PasteSpecial />

      <Meter>{meter.map((m, i) => <MeterBar key={i} style={{ background: m }} />)}</Meter>
      <Activation><strong>激活 Windows</strong>转到“设置”以激活 Windows。</Activation>
      <ImeBar>
        <svg width="22" height="22" viewBox="0 0 22 22">
          <circle cx="11" cy="11" r="9.500" fill="#fff" stroke="#4b6ff5" strokeWidth="2" />
          <text x="11" y="14" textAnchor="middle" fontSize="8" fontWeight="700" fontFamily="Liberation Sans, sans-serif" fill="#4b6ff5">iFLY</text>
        </svg>
        <b>中</b>
        <Icon w={22} sw={2}><circle cx="7" cy="6" r="2.500" /><path d="M14 11h5v4l-3 4h-2l1-3h-1z" fill="currentColor" stroke="none" /></Icon>
        <Icon w={22} sw={2}><rect x="8" y="3" width="6" height="10" rx="3" fill="currentColor" stroke="none" /><P d="M5 10q1 6 6 6t6-6M11 16v4" /></Icon>
        <Icon w={22}><path d="M11 3a4 4.500 0 0 1 3 8q6 1.500 6 7H2q0-5.500 6-7a4 4.500 0 0 1 3-8z" fill="currentColor" stroke="none" /></Icon>
        <Icon w={22}><path d="M4 4h6v6H4zM4 12h6v6H4zM12 12h6v6h-6zM15 2.500l4 4-4 4-4-4z" fill="currentColor" stroke="none" /></Icon>
      </ImeBar>
      <SiteMark>
        <svg width="46" height="46" viewBox="0 0 46 46" aria-hidden="true">
          <path d="M46 4Q26 0 13 12 4 21 5 31q4-8 12-15Q27 7 46 4z" fill="#4aa6e6" opacity=".85" />
          <path d="M3 37q7-20 24-20 8 1 4 7-7 9-17 4 8 1 12-3 3-4-2-4-12 0-21 16z" fill="#57a9de" opacity=".8" />
          <path d="M33 14q14 4 8 15-8 13-29 13 16-5 23-14 5-8-2-14z" fill="#74c267" opacity=".85" />
          <path d="M5 34q3 7 12 5-5 5-10 3-3-3-2-8z" fill="#b9d65a" opacity=".85" />
        </svg>
        <SiteName>极光下载站<small>www.xz7.com</small></SiteName>
      </SiteMark>
    </Shell>
  );
}
